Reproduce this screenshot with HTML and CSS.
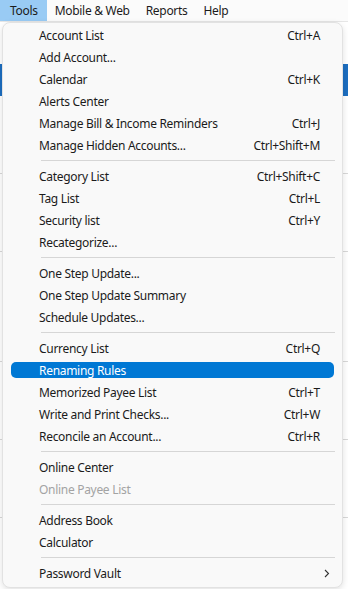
FILE: index.html
```html
<!DOCTYPE html>
<html lang="en">
<head>
    <meta charset="UTF-8">
    <title>Tools Menu</title>
    <link rel="stylesheet" href="styles.css">
</head>
<body>
    <div class="menubar">
        <span class="menubar-item open">Tools</span>
        <span class="menubar-item">Mobile &amp; Web</span>
        <span class="menubar-item">Reports</span>
        <span class="menubar-item">Help</span>
    </div>

    <div class="app">
        <div class="gap-row"></div>
        <div class="selected-row"></div>
        <div class="list-row"></div>
        <div class="list-row"></div>
        <div class="list-row tall"></div>
        <div class="list-row"></div>
        <div class="list-row"></div>
    </div>

    <div class="menu">
        <div class="item"><span>Account List</span><span class="key">Ctrl+A</span></div>
        <div class="item"><span>Add Account...</span></div>
        <div class="item"><span>Calendar</span><span class="key">Ctrl+K</span></div>
        <div class="item"><span>Alerts Center</span></div>
        <div class="item"><span>Manage Bill &amp; Income Reminders</span><span class="key">Ctrl+J</span></div>
        <div class="item"><span>Manage Hidden Accounts...</span><span class="key">Ctrl+Shift+M</span></div>
        <div class="separator"></div>
        <div class="item"><span>Category List</span><span class="key">Ctrl+Shift+C</span></div>
        <div class="item"><span>Tag List</span><span class="key">Ctrl+L</span></div>
        <div class="item"><span>Security list</span><span class="key">Ctrl+Y</span></div>
        <div class="item"><span>Recategorize...</span></div>
        <div class="separator"></div>
        <div class="item"><span>One Step Update...</span></div>
        <div class="item"><span>One Step Update Summary</span></div>
        <div class="item"><span>Schedule Updates...</span></div>
        <div class="separator"></div>
        <div class="item"><span>Currency List</span><span class="key">Ctrl+Q</span></div>
        <div class="item active"><span>Renaming Rules</span></div>
        <div class="item"><span>Memorized Payee List</span><span class="key">Ctrl+T</span></div>
        <div class="item"><span>Write and Print Checks...</span><span class="key">Ctrl+W</span></div>
        <div class="item"><span>Reconcile an Account...</span><span class="key">Ctrl+R</span></div>
        <div class="separator"></div>
        <div class="item"><span>Online Center</span></div>
        <div class="item disabled"><span>Online Payee List</span></div>
        <div class="separator"></div>
        <div class="item"><span>Address Book</span></div>
        <div class="item"><span>Calculator</span></div>
        <div class="separator"></div>
        <div class="item">
            <span>Password Vault</span>
            <svg class="arrow" width="6" height="9" viewBox="0 0 6 9">
                <path d="M1 1 L4.5 4.5 L1 8" fill="none" stroke="#333" stroke-width="1.1"/>
            </svg>
        </div>
    </div>
</body>
</html>
```

FILE: styles.css
```css
* {
    box-sizing: border-box;
    margin: 0;
    padding: 0;
}

body {
    background: #ffffff;
    font-family: 'Segoe UI', 'Noto Sans', sans-serif;
    font-size: 12px;
    letter-spacing: -0.3px;
    color: #1b1b1b;
    width: 348px;
    height: 589px;
    overflow: hidden;
}

.menubar {
    display: flex;
    height: 22px;
    background: #fbfbfb;
    border-bottom: 1px solid #e6e6e6;
}

.menubar-item {
    padding: 0 8px;
    line-height: 21px;
}

.menubar-item.open {
    background: #99cbf4;
    padding: 0 9px 0 10px;
}

.app {
    display: flex;
    flex-direction: column;
}

.gap-row {
    height: 42px;
}

.selected-row {
    height: 32px;
    background: #1d6ec0;
}

.list-row {
    height: 78px;
    border-bottom: 1px solid #d8d8d8;
}

.list-row.tall {
    height: 110px;
}

.menu {
    position: absolute;
    top: 22px;
    left: 2px;
    width: 341px;
    height: 566px;
    display: flex;
    flex-direction: column;
    padding: 1px 0 2px;
    background: #f9f9f9;
    border: 1px solid #e2e2e2;
    border-radius: 8px;
    box-shadow: 0 2px 6px rgba(0, 0, 0, 0.12);
}

.item {
    display: flex;
    justify-content: space-between;
    align-items: center;
    height: 16px;
    margin: 3px 8px;
    padding: 0 14px 0 28px;
    border-radius: 5px;
    white-space: nowrap;
}

.item.active {
    background: #0078d4;
    color: #ffffff;
}

.item.disabled {
    color: #a3a3a3;
}

.arrow {
    margin-right: -10px;
}

.separator {
    height: 1px;
    margin: 4px 7px 4px 38px;
    background: #d6d6d6;
}
```
